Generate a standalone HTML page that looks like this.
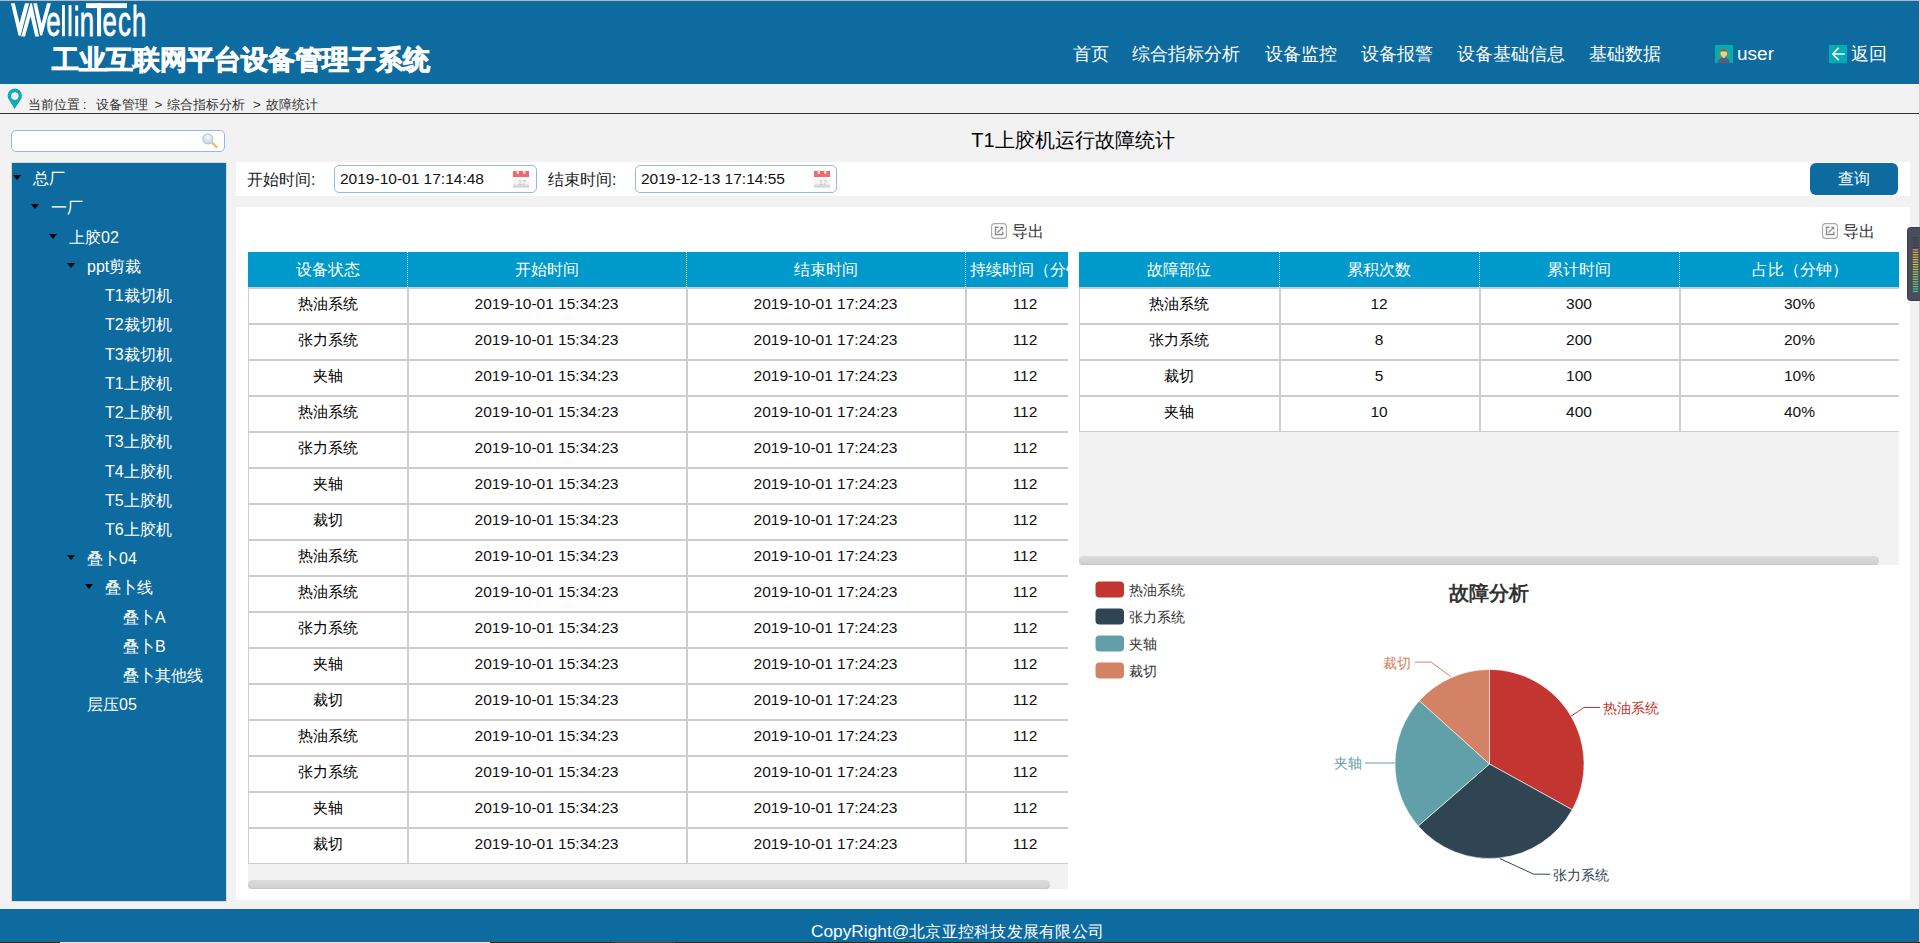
<!DOCTYPE html>
<html><head><meta charset="utf-8">
<style>
*{margin:0;padding:0;box-sizing:border-box}
html,body{width:1920px;height:943px;overflow:hidden;background:#f2f2f2;font-family:"Liberation Sans",sans-serif;color:#333;position:relative}
.a{position:absolute}
.blue{background:#0e6ba0}
.nav{position:absolute;top:41px;font-size:18px;color:#fff;line-height:26px;white-space:nowrap}
.tree div{position:absolute;color:#fff;font-size:16px;line-height:20px;white-space:nowrap}
.tri{position:absolute;width:0;height:0;border-left:4.5px solid transparent;border-right:4.5px solid transparent;border-top:5px solid #000}
.th{position:absolute;top:252px;height:35px;background:#0099cc;color:#fff;font-size:16px;line-height:35px;text-align:center;white-space:nowrap;overflow:hidden}
.hl{position:absolute;height:2px;background:#cdcdcd}
.vl{position:absolute;width:2px;background:#cdcdcd}
.dot{position:absolute;top:252px;width:1px;height:35px;background:repeating-linear-gradient(to bottom,#cfeaf5 0,#cfeaf5 1px,transparent 1px,transparent 2px)}
.td{position:absolute;font-size:15px;line-height:20px;text-align:center;color:#000;white-space:nowrap}
.num{font-size:15.5px;color:#111}
</style></head><body>
<!-- top line -->
<div class="a" style="left:0;top:0;width:1920px;height:1px;background:#b8b8b8"></div>
<!-- header -->
<div class="a blue" style="left:0;top:1px;width:1919px;height:83px"></div>
<div class="a" style="left:1919px;top:0;width:1px;height:943px;background:#cfcfcf"></div>

<!-- logo -->
<svg class="a" style="left:0;top:0" width="160" height="44" viewBox="0 0 160 44">
<g fill="#fff">
<polygon points="10.9,3.2 14.8,3.2 19.5,23 25,3.2 29.1,3.2 20.6,35.8 18.6,35.8"/>
<polygon points="21.2,36.4 25,36.4 30.6,16.3 35.2,36.4 39,36.4 31.9,3.2 30.4,3.2"/>
<polygon points="33.2,3.2 36.9,3.2 41.5,23.4 47,3.2 50.9,3.2 42.2,35.4 40.2,35.4"/>
<rect x="62" y="5.1" width="2.9" height="31.1"/>
<rect x="68.6" y="5.1" width="2.9" height="31.1"/>
<rect x="75.2" y="5.3" width="3" height="5.3"/>
<rect x="75.2" y="15.7" width="3" height="20.5"/>
<rect x="86" y="3.2" width="41" height="4.9"/>
<rect x="97" y="3.2" width="4.1" height="33.1"/>
</g>
<g transform="scale(0.6,1)" fill="#fff" stroke="#fff" stroke-width="0.8" font-family="Liberation Sans" font-size="43">
<text x="77" y="36.4">e</text><text x="133" y="36.4">n</text><text x="171" y="36.4">e</text><text x="196.5" y="36.4">c</text><text x="220" y="36.4">h</text>
</g>
</svg>
<div class="a" style="left:52px;top:42px;font-size:27px;font-weight:bold;-webkit-text-stroke:0.9px #fff;color:#fff;line-height:36px;white-space:nowrap">工业互联网平台设备管理子系统</div>
<div class="nav" style="left:1073px">首页</div>
<div class="nav" style="left:1132px">综合指标分析</div>
<div class="nav" style="left:1265px">设备监控</div>
<div class="nav" style="left:1361px">设备报警</div>
<div class="nav" style="left:1457px">设备基础信息</div>
<div class="nav" style="left:1589px">基础数据</div>
<svg class="a" style="left:1715px;top:45px" width="18" height="18" viewBox="0 0 18 18">
  <rect width="18" height="18" fill="#00adb6"/>
  <circle cx="8.85" cy="10.6" r="7.1" fill="#26a98a"/>
  <path d="M2.6,18 Q3,12.9 8.8,12.3 Q14.6,12.9 15,18 Z" fill="#585e7e"/>
  <rect x="7.8" y="10.5" width="2" height="2.5" fill="#f6c793"/>
  <ellipse cx="8.8" cy="8.2" rx="3.2" ry="3.8" fill="#f8cb94"/>
  <path d="M5.7,7.2 Q5.8,4.2 8.8,4.1 Q11.9,4.2 11.9,7.2 Q10.5,5.8 8.6,6.6 Q7,5.6 5.7,7.2Z" fill="#8a5c3c"/>
</svg>
<div class="nav" style="left:1737px;font-size:19px">user</div>
<svg class="a" style="left:1829px;top:45px" width="18" height="18" viewBox="0 0 18 18">
  <rect width="18" height="18" fill="#00adb6"/>
  <path d="M9.3,3.3 L3.7,9 L9.3,14.6 M3.7,9 L15.2,9" stroke="#fff" stroke-width="1.6" fill="none" stroke-linecap="round" stroke-linejoin="round"/>
</svg>
<div class="nav" style="left:1851px">返回</div>

<!-- breadcrumb -->
<svg class="a" style="left:7px;top:88px" width="16" height="24" viewBox="0 0 16 24">
  <path d="M7.6,20.9 L1.9,11.6 A7.1,7.1 0 1 1 13.7,11.6 Z" fill="#0aadb5"/>
  <circle cx="7.8" cy="8.1" r="3.8" fill="#f2f2f2"/>
</svg>
<div class="a" style="left:28.4px;top:95.5px;font-size:13.33px;line-height:18px;color:#333;white-space:nowrap">当前位置</div><div class="a" style="left:82.8px;top:95.5px;font-size:13.33px;line-height:18px;color:#333;white-space:nowrap">:</div><div class="a" style="left:95.8px;top:95.5px;font-size:13.33px;line-height:18px;color:#333;white-space:nowrap">设备管理</div><div class="a" style="left:154.6px;top:95.5px;font-size:13.33px;line-height:18px;color:#333;white-space:nowrap">&gt;</div><div class="a" style="left:167.1px;top:95.5px;font-size:13.33px;line-height:18px;color:#333;white-space:nowrap">综合指标分析</div><div class="a" style="left:253px;top:95.5px;font-size:13.33px;line-height:18px;color:#333;white-space:nowrap">&gt;</div><div class="a" style="left:265.9px;top:95.5px;font-size:13.33px;line-height:18px;color:#333;white-space:nowrap">故障统计</div>
<div class="a" style="left:0;top:113px;width:1919px;height:1px;background:#333"></div>

<!-- search -->
<div class="a" style="left:11px;top:130px;width:214px;height:22px;border:1px solid #95b8e7;border-radius:5px;background:#fff"></div>
<svg class="a" style="left:200px;top:132px" width="20" height="18" viewBox="0 0 20 18">
<defs><radialGradient id="mg" cx="0.5" cy="0.3" r="0.7"><stop offset="0" stop-color="#f4faff"/><stop offset="1" stop-color="#b9d8f6"/></radialGradient></defs>
<line x1="12.5" y1="11" x2="16.5" y2="15.2" stroke="#f0c060" stroke-width="2.4" stroke-linecap="round"/>
<circle cx="7.8" cy="6.9" r="5" fill="url(#mg)" stroke="#c8c8c8" stroke-width="1.3"/>
</svg>
<!-- tree -->
<div class="a blue" style="left:11px;top:162px;width:216px;height:740px;border:1px solid #d8d8d8"></div>
<div class="tree">
<span class="tri" style="left:13px;top:175.10px"></span>
<div style="left:33px;top:169.20px">总厂</div>
<span class="tri" style="left:31px;top:204.33px"></span>
<div style="left:51px;top:198.43px">一厂</div>
<span class="tri" style="left:49px;top:233.56px"></span>
<div style="left:69px;top:227.66px">上胶02</div>
<span class="tri" style="left:67px;top:262.79px"></span>
<div style="left:87px;top:256.89px">ppt剪裁</div>
<div style="left:105px;top:286.12px">T1裁切机</div>
<div style="left:105px;top:315.35px">T2裁切机</div>
<div style="left:105px;top:344.58px">T3裁切机</div>
<div style="left:105px;top:373.81px">T1上胶机</div>
<div style="left:105px;top:403.04px">T2上胶机</div>
<div style="left:105px;top:432.27px">T3上胶机</div>
<div style="left:105px;top:461.50px">T4上胶机</div>
<div style="left:105px;top:490.73px">T5上胶机</div>
<div style="left:105px;top:519.96px">T6上胶机</div>
<span class="tri" style="left:67px;top:555.09px"></span>
<div style="left:87px;top:549.19px">叠卜04</div>
<span class="tri" style="left:85px;top:584.32px"></span>
<div style="left:105px;top:578.42px">叠卜线</div>
<div style="left:123px;top:607.65px">叠卜A</div>
<div style="left:123px;top:636.88px">叠卜B</div>
<div style="left:123px;top:666.11px">叠卜其他线</div>
<div style="left:87px;top:695.34px">层压05</div>
</div>
<!-- title -->
<div class="a" style="left:236px;top:127px;width:1674px;text-align:center;font-size:20px;line-height:26px;color:#000;white-space:nowrap">T1上胶机运行故障统计</div>
<!-- toolbar -->
<div class="a" style="left:236px;top:162px;width:1674px;height:34px;background:#fff"></div>
<div class="a" style="left:247px;top:169px;font-size:16px;line-height:22px;color:#222;white-space:nowrap">开始时间:</div>
<div class="a" style="left:334px;top:165px;width:203px;height:28px;border:1px solid #95b8e7;border-radius:5px;background:#fff"></div>
<div class="a" style="left:340px;top:169px;font-size:15.5px;line-height:20px;color:#111;white-space:nowrap">2019-10-01 17:14:48</div>
<svg class="a" style="left:513px;top:170px" width="16" height="18" viewBox="0 0 16 18">
<defs><linearGradient id="cg1" x1="0" y1="0" x2="0" y2="1"><stop offset="0" stop-color="#fff"/><stop offset="0.75" stop-color="#f3f3f3"/><stop offset="1" stop-color="#c9c9c9"/></linearGradient></defs>
<rect x="0" y="1" width="16" height="16.5" fill="url(#cg1)"/>
<rect x="0" y="1" width="16" height="6" fill="#ec6b6e"/>
<rect x="3.5" y="0" width="2.5" height="4" rx="1" fill="#ddd"/><rect x="10" y="0" width="2.5" height="4" rx="1" fill="#ddd"/>
<text x="5" y="15" font-size="7" fill="#bbb" font-family="Liberation Sans">17</text>
</svg>
<div class="a" style="left:548px;top:169px;font-size:16px;line-height:22px;color:#222;white-space:nowrap">结束时间:</div>
<div class="a" style="left:635px;top:165px;width:202px;height:28px;border:1px solid #95b8e7;border-radius:5px;background:#fff"></div>
<div class="a" style="left:641px;top:169px;font-size:15.5px;line-height:20px;color:#111;white-space:nowrap">2019-12-13 17:14:55</div>
<svg class="a" style="left:814px;top:170px" width="16" height="18" viewBox="0 0 16 18">
<defs><linearGradient id="cg2" x1="0" y1="0" x2="0" y2="1"><stop offset="0" stop-color="#fff"/><stop offset="0.75" stop-color="#f3f3f3"/><stop offset="1" stop-color="#c9c9c9"/></linearGradient></defs>
<rect x="0" y="1" width="16" height="16.5" fill="url(#cg2)"/>
<rect x="0" y="1" width="16" height="6" fill="#ec6b6e"/>
<rect x="3.5" y="0" width="2.5" height="4" rx="1" fill="#ddd"/><rect x="10" y="0" width="2.5" height="4" rx="1" fill="#ddd"/>
<text x="5" y="15" font-size="7" fill="#bbb" font-family="Liberation Sans">17</text>
</svg>
<div class="a blue" style="left:1810px;top:162.5px;width:88px;height:32.5px;border-radius:6px;color:#fff;font-size:16px;line-height:31px;text-align:center">查询</div>
<!-- main panel -->
<div class="a" style="left:236px;top:207px;width:1674px;height:693px;background:#fff"></div>
<svg class="a" style="left:991px;top:223px" width="16" height="16" viewBox="0 0 16 16">
<rect x="0.6" y="0.6" width="14.8" height="14.8" rx="3" fill="none" stroke="#a8a8a8" stroke-width="1.1"/>
<path d="M7.5,4.2 H4.5 V11.5 H11.8 V8.5" fill="none" stroke="#8c8c8c" stroke-width="1.4"/>
<path d="M6.5,9.5 L11.2,4.8" fill="none" stroke="#888" stroke-width="1.2"/><path d="M8.8,3.8 H12.2 V7.2 Z" fill="#888"/>
</svg>
<div class="a" style="left:1012px;top:222px;font-size:16px;line-height:20px;color:#333;white-space:nowrap">导出</div>
<svg class="a" style="left:1822px;top:223px" width="16" height="16" viewBox="0 0 16 16">
<rect x="0.6" y="0.6" width="14.8" height="14.8" rx="3" fill="none" stroke="#a8a8a8" stroke-width="1.1"/>
<path d="M7.5,4.2 H4.5 V11.5 H11.8 V8.5" fill="none" stroke="#8c8c8c" stroke-width="1.4"/>
<path d="M6.5,9.5 L11.2,4.8" fill="none" stroke="#888" stroke-width="1.2"/><path d="M8.8,3.8 H12.2 V7.2 Z" fill="#888"/>
</svg>
<div class="a" style="left:1843px;top:222px;font-size:16px;line-height:20px;color:#333;white-space:nowrap">导出</div>
<!-- left table -->
<div class="a" style="left:248px;top:252px;width:820px;height:637px;background:#f2f2f2;overflow:hidden">
<div style="position:absolute;left:0;top:0;width:880px;height:35px;background:#0099cc"></div>
<div class="th" style="left:0px;top:0;width:159px;text-align:center;">设备状态</div>
<div class="th" style="left:159px;top:0;width:279px;text-align:center;">开始时间</div>
<div class="th" style="left:438px;top:0;width:279px;text-align:center;">结束时间</div>
<div class="th" style="left:717px;top:0;width:120px;text-align:left;padding-left:5px;">持续时间（分钟）</div>
<div class="dot" style="left:159px;top:0"></div>
<div class="dot" style="left:438px;top:0"></div>
<div class="dot" style="left:717px;top:0"></div>
<div style="position:absolute;left:0;top:35px;width:880px;height:577px;background:#fff"></div>
<div class="hl" style="left:0;top:35px;width:880px"></div>
<div class="td" style="left:0;top:42px;width:159px">热油系统</div>
<div class="td num" style="left:159px;top:42px;width:279px">2019-10-01 15:34:23</div>
<div class="td num" style="left:438px;top:42px;width:279px">2019-10-01 17:24:23</div>
<div class="td num" style="left:717px;width:120px;top:42px">112</div>
<div class="hl" style="left:0;top:71px;width:880px"></div>
<div class="td" style="left:0;top:78px;width:159px">张力系统</div>
<div class="td num" style="left:159px;top:78px;width:279px">2019-10-01 15:34:23</div>
<div class="td num" style="left:438px;top:78px;width:279px">2019-10-01 17:24:23</div>
<div class="td num" style="left:717px;width:120px;top:78px">112</div>
<div class="hl" style="left:0;top:107px;width:880px"></div>
<div class="td" style="left:0;top:114px;width:159px">夹轴</div>
<div class="td num" style="left:159px;top:114px;width:279px">2019-10-01 15:34:23</div>
<div class="td num" style="left:438px;top:114px;width:279px">2019-10-01 17:24:23</div>
<div class="td num" style="left:717px;width:120px;top:114px">112</div>
<div class="hl" style="left:0;top:143px;width:880px"></div>
<div class="td" style="left:0;top:150px;width:159px">热油系统</div>
<div class="td num" style="left:159px;top:150px;width:279px">2019-10-01 15:34:23</div>
<div class="td num" style="left:438px;top:150px;width:279px">2019-10-01 17:24:23</div>
<div class="td num" style="left:717px;width:120px;top:150px">112</div>
<div class="hl" style="left:0;top:179px;width:880px"></div>
<div class="td" style="left:0;top:186px;width:159px">张力系统</div>
<div class="td num" style="left:159px;top:186px;width:279px">2019-10-01 15:34:23</div>
<div class="td num" style="left:438px;top:186px;width:279px">2019-10-01 17:24:23</div>
<div class="td num" style="left:717px;width:120px;top:186px">112</div>
<div class="hl" style="left:0;top:215px;width:880px"></div>
<div class="td" style="left:0;top:222px;width:159px">夹轴</div>
<div class="td num" style="left:159px;top:222px;width:279px">2019-10-01 15:34:23</div>
<div class="td num" style="left:438px;top:222px;width:279px">2019-10-01 17:24:23</div>
<div class="td num" style="left:717px;width:120px;top:222px">112</div>
<div class="hl" style="left:0;top:251px;width:880px"></div>
<div class="td" style="left:0;top:258px;width:159px">裁切</div>
<div class="td num" style="left:159px;top:258px;width:279px">2019-10-01 15:34:23</div>
<div class="td num" style="left:438px;top:258px;width:279px">2019-10-01 17:24:23</div>
<div class="td num" style="left:717px;width:120px;top:258px">112</div>
<div class="hl" style="left:0;top:287px;width:880px"></div>
<div class="td" style="left:0;top:294px;width:159px">热油系统</div>
<div class="td num" style="left:159px;top:294px;width:279px">2019-10-01 15:34:23</div>
<div class="td num" style="left:438px;top:294px;width:279px">2019-10-01 17:24:23</div>
<div class="td num" style="left:717px;width:120px;top:294px">112</div>
<div class="hl" style="left:0;top:323px;width:880px"></div>
<div class="td" style="left:0;top:330px;width:159px">热油系统</div>
<div class="td num" style="left:159px;top:330px;width:279px">2019-10-01 15:34:23</div>
<div class="td num" style="left:438px;top:330px;width:279px">2019-10-01 17:24:23</div>
<div class="td num" style="left:717px;width:120px;top:330px">112</div>
<div class="hl" style="left:0;top:359px;width:880px"></div>
<div class="td" style="left:0;top:366px;width:159px">张力系统</div>
<div class="td num" style="left:159px;top:366px;width:279px">2019-10-01 15:34:23</div>
<div class="td num" style="left:438px;top:366px;width:279px">2019-10-01 17:24:23</div>
<div class="td num" style="left:717px;width:120px;top:366px">112</div>
<div class="hl" style="left:0;top:395px;width:880px"></div>
<div class="td" style="left:0;top:402px;width:159px">夹轴</div>
<div class="td num" style="left:159px;top:402px;width:279px">2019-10-01 15:34:23</div>
<div class="td num" style="left:438px;top:402px;width:279px">2019-10-01 17:24:23</div>
<div class="td num" style="left:717px;width:120px;top:402px">112</div>
<div class="hl" style="left:0;top:431px;width:880px"></div>
<div class="td" style="left:0;top:438px;width:159px">裁切</div>
<div class="td num" style="left:159px;top:438px;width:279px">2019-10-01 15:34:23</div>
<div class="td num" style="left:438px;top:438px;width:279px">2019-10-01 17:24:23</div>
<div class="td num" style="left:717px;width:120px;top:438px">112</div>
<div class="hl" style="left:0;top:467px;width:880px"></div>
<div class="td" style="left:0;top:474px;width:159px">热油系统</div>
<div class="td num" style="left:159px;top:474px;width:279px">2019-10-01 15:34:23</div>
<div class="td num" style="left:438px;top:474px;width:279px">2019-10-01 17:24:23</div>
<div class="td num" style="left:717px;width:120px;top:474px">112</div>
<div class="hl" style="left:0;top:503px;width:880px"></div>
<div class="td" style="left:0;top:510px;width:159px">张力系统</div>
<div class="td num" style="left:159px;top:510px;width:279px">2019-10-01 15:34:23</div>
<div class="td num" style="left:438px;top:510px;width:279px">2019-10-01 17:24:23</div>
<div class="td num" style="left:717px;width:120px;top:510px">112</div>
<div class="hl" style="left:0;top:539px;width:880px"></div>
<div class="td" style="left:0;top:546px;width:159px">夹轴</div>
<div class="td num" style="left:159px;top:546px;width:279px">2019-10-01 15:34:23</div>
<div class="td num" style="left:438px;top:546px;width:279px">2019-10-01 17:24:23</div>
<div class="td num" style="left:717px;width:120px;top:546px">112</div>
<div class="hl" style="left:0;top:575px;width:880px"></div>
<div class="td" style="left:0;top:582px;width:159px">裁切</div>
<div class="td num" style="left:159px;top:582px;width:279px">2019-10-01 15:34:23</div>
<div class="td num" style="left:438px;top:582px;width:279px">2019-10-01 17:24:23</div>
<div class="td num" style="left:717px;width:120px;top:582px">112</div>
<div class="hl" style="left:0;top:611px;width:880px;height:1px"></div>
<div class="a" style="left:0;top:35px;width:1px;height:577px;background:#cdcdcd"></div>
<div class="vl" style="left:159px;top:35px;height:577px"></div>
<div class="vl" style="left:438px;top:35px;height:577px"></div>
<div class="vl" style="left:717px;top:35px;height:577px"></div>
<div style="position:absolute;left:0;top:628px;width:802px;height:9px;border-radius:5px;background:linear-gradient(#dcdcdc,#cfcfcf);box-shadow:inset 0 -1px 0 #c4c4c4"></div>
</div>
<!-- right table -->
<div class="a" style="left:1079px;top:252px;width:820px;height:313px;background:#f2f2f2;overflow:hidden">
<div class="th" style="left:0px;top:0;width:200px">故障部位</div>
<div class="th" style="left:200px;top:0;width:200px">累积次数</div>
<div class="th" style="left:400px;top:0;width:200px">累计时间</div>
<div class="th" style="left:600px;top:0;width:241px">占比（分钟）</div>
<div class="dot" style="left:200px;top:0"></div>
<div class="dot" style="left:400px;top:0"></div>
<div class="dot" style="left:600px;top:0"></div>
<div style="position:absolute;left:0;top:35px;width:820px;height:145px;background:#fff"></div>
<div class="hl" style="left:0;top:35px;width:820px"></div>
<div class="td" style="left:0px;top:42px;width:200px">热油系统</div>
<div class="td num" style="left:200px;top:42px;width:200px">12</div>
<div class="td num" style="left:400px;top:42px;width:200px">300</div>
<div class="td num" style="left:600px;top:42px;width:241px">30%</div>
<div class="hl" style="left:0;top:71px;width:820px"></div>
<div class="td" style="left:0px;top:78px;width:200px">张力系统</div>
<div class="td num" style="left:200px;top:78px;width:200px">8</div>
<div class="td num" style="left:400px;top:78px;width:200px">200</div>
<div class="td num" style="left:600px;top:78px;width:241px">20%</div>
<div class="hl" style="left:0;top:107px;width:820px"></div>
<div class="td" style="left:0px;top:114px;width:200px">裁切</div>
<div class="td num" style="left:200px;top:114px;width:200px">5</div>
<div class="td num" style="left:400px;top:114px;width:200px">100</div>
<div class="td num" style="left:600px;top:114px;width:241px">10%</div>
<div class="hl" style="left:0;top:143px;width:820px"></div>
<div class="td" style="left:0px;top:150px;width:200px">夹轴</div>
<div class="td num" style="left:200px;top:150px;width:200px">10</div>
<div class="td num" style="left:400px;top:150px;width:200px">400</div>
<div class="td num" style="left:600px;top:150px;width:241px">40%</div>
<div class="hl" style="left:0;top:179px;width:820px;height:1px"></div>
<div class="a" style="left:0;top:35px;width:1px;height:145px;background:#cdcdcd"></div>
<div class="vl" style="left:200px;top:35px;height:145px"></div>
<div class="vl" style="left:400px;top:35px;height:145px"></div>
<div class="vl" style="left:600px;top:35px;height:145px"></div>
<div style="position:absolute;left:0;top:304px;width:800px;height:9px;border-radius:5px;background:linear-gradient(#dcdcdc,#cfcfcf);box-shadow:inset 0 -1px 0 #c4c4c4"></div>
</div>
<!-- chart -->
<svg class="a" style="left:0;top:0" width="1920" height="943" viewBox="0 0 1920 943">
<path d="M1489.5,764 L1489.50,669.50 A94.5,94.5 0 0 1 1572.20,809.72 Z" fill="#c23531" stroke="#fff" stroke-width="0.6" stroke-linejoin="round"/>
<path d="M1489.5,764 L1572.20,809.72 A94.5,94.5 0 0 1 1418.19,826.00 Z" fill="#2f4554" stroke="#fff" stroke-width="0.6" stroke-linejoin="round"/>
<path d="M1489.5,764 L1418.19,826.00 A94.5,94.5 0 0 1 1419.35,700.68 Z" fill="#61a0a8" stroke="#fff" stroke-width="0.6" stroke-linejoin="round"/>
<path d="M1489.5,764 L1419.35,700.68 A94.5,94.5 0 0 1 1489.50,669.50 Z" fill="#d48265" stroke="#fff" stroke-width="0.6" stroke-linejoin="round"/>
<polyline points="1571,716.2 1583.9,707.5 1600.2,707.5" fill="none" stroke="#c23531" stroke-width="1"/>
<polyline points="1499.8,858.5 1533.7,874.2 1550,874.2" fill="none" stroke="#2f4554" stroke-width="1"/>
<polyline points="1394.7,763 1365,763" fill="none" stroke="#61a0a8" stroke-width="1"/>
<polyline points="1450.6,676.5 1431.1,662.1 1415,662.1" fill="none" stroke="#d48265" stroke-width="1"/>
<rect x="1095.5" y="581.5" width="28.5" height="16" rx="4" fill="#c23531"/>
<rect x="1095.5" y="608.5" width="28.5" height="16" rx="4" fill="#2f4554"/>
<rect x="1095.5" y="635.5" width="28.5" height="16" rx="4" fill="#61a0a8"/>
<rect x="1095.5" y="662.5" width="28.5" height="16" rx="4" fill="#d48265"/>
</svg>
<div class="a" style="left:1129px;top:579.5px;font-size:14px;line-height:20px;color:#333;white-space:nowrap">热油系统</div>
<div class="a" style="left:1129px;top:606.5px;font-size:14px;line-height:20px;color:#333;white-space:nowrap">张力系统</div>
<div class="a" style="left:1129px;top:633.5px;font-size:14px;line-height:20px;color:#333;white-space:nowrap">夹轴</div>
<div class="a" style="left:1129px;top:660.5px;font-size:14px;line-height:20px;color:#333;white-space:nowrap">裁切</div>
<div class="a" style="left:1389px;top:579px;width:200px;text-align:center;font-size:20px;font-weight:bold;line-height:28px;color:#333;white-space:nowrap">故障分析</div>
<div class="a" style="left:1603px;top:698px;font-size:14px;line-height:20px;color:#c23531;white-space:nowrap">热油系统</div>
<div class="a" style="left:1553px;top:865px;font-size:14px;line-height:20px;color:#2f4554;white-space:nowrap">张力系统</div>
<div class="a" style="left:1334px;top:753px;font-size:14px;line-height:20px;color:#61a0a8;white-space:nowrap">夹轴</div>
<div class="a" style="left:1383px;top:653px;font-size:14px;line-height:20px;color:#d48265;white-space:nowrap">裁切</div>
<svg class="a" style="left:1907px;top:227px" width="13" height="74" viewBox="0 0 13 74">
<rect x="0.5" y="0.5" width="16" height="73" rx="3" fill="#4a4e5b" stroke="#3a3d47"/>
<rect x="5.8" y="10.00" width="5.5" height="1.2" fill="#3b3f4a"/>
<rect x="5.8" y="12.45" width="5.5" height="1.2" fill="#3b3f4a"/>
<rect x="5.8" y="14.90" width="5.5" height="1.2" fill="#3b3f4a"/>
<rect x="5.8" y="17.35" width="5.5" height="1.2" fill="#3b3f4a"/>
<rect x="5.8" y="19.80" width="5.5" height="1.2" fill="#3b3f4a"/>
<rect x="5.8" y="22.25" width="5.5" height="1.2" fill="#e09a4c"/>
<rect x="5.8" y="24.70" width="5.5" height="1.2" fill="#e0a44b"/>
<rect x="5.8" y="27.15" width="5.5" height="1.2" fill="#e0af4b"/>
<rect x="5.8" y="29.60" width="5.5" height="1.2" fill="#e0ba4a"/>
<rect x="5.8" y="32.05" width="5.5" height="1.2" fill="#e0c54a"/>
<rect x="5.8" y="34.50" width="5.5" height="1.2" fill="#d7c84c"/>
<rect x="5.8" y="36.95" width="5.5" height="1.2" fill="#ccc84e"/>
<rect x="5.8" y="39.40" width="5.5" height="1.2" fill="#c0c851"/>
<rect x="5.8" y="41.85" width="5.5" height="1.2" fill="#b5c854"/>
<rect x="5.8" y="44.30" width="5.5" height="1.2" fill="#a9c856"/>
<rect x="5.8" y="46.75" width="5.5" height="1.2" fill="#9ec859"/>
<rect x="5.8" y="49.20" width="5.5" height="1.2" fill="#90c863"/>
<rect x="5.8" y="51.65" width="5.5" height="1.2" fill="#82c86e"/>
<rect x="5.8" y="54.10" width="5.5" height="1.2" fill="#74c87a"/>
<rect x="5.8" y="56.55" width="5.5" height="1.2" fill="#66c885"/>
<rect x="5.8" y="59.00" width="5.5" height="1.2" fill="#58c891"/>
<rect x="5.8" y="61.45" width="5.5" height="1.2" fill="#4ac89c"/>
<rect x="5.8" y="63.90" width="5.5" height="1.2" fill="#3cc8a8"/>
</svg>
<!-- footer -->
<div class="a blue" style="left:0;top:909px;width:1919px;height:34px"></div>
<div class="a" style="left:811px;top:920px;font-size:16px;color:#fff;line-height:22px;white-space:nowrap;letter-spacing:0.25px"><span style="font-size:17.3px;letter-spacing:0">CopyRight@</span>北京亚控科技发展有限公司</div>
<div class="a" style="left:0;top:942px;width:1920px;height:1px;background:#3a2418"></div>
<div class="a" style="left:60px;top:942px;width:430px;height:1px;background:#e8e8e8"></div>
<div class="a" style="left:615px;top:942px;width:60px;height:1px;background:#5a4030"></div>
</body></html>
